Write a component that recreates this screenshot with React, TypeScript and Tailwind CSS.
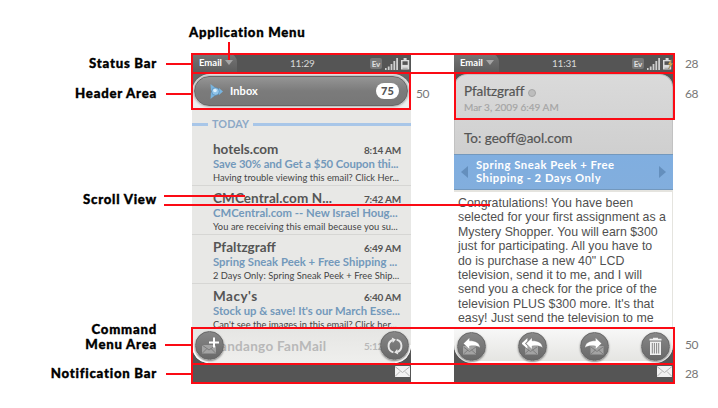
import React from "react";

type Mail = {
  from: string;
  time: string;
  subject: string;
  preview: string;
  fromClass: string;
  subjectClass: string;
  previewClass: string;
};

const mails: Mail[] = [
  {
    from: "hotels.com",
    time: "8:14 AM",
    subject: "Save 30% and Get a $50 Coupon thi...",
    preview: "Having trouble viewing this email? Click Her...",
    fromClass: "tracking-normal",
    subjectClass: "tracking-[-0.08px]",
    previewClass: "tracking-[0.02px]",
  },
  {
    from: "CMCentral.com N...",
    time: "7:42 AM",
    subject: "CMCentral.com -- New Israel Houg...",
    preview: "You are receiving this email because you su...",
    fromClass: "tracking-[0.1px]",
    subjectClass: "tracking-[0.03px]",
    previewClass: "tracking-[0.07px]",
  },
  {
    from: "Pfaltzgraff",
    time: "6:49 AM",
    subject: "Spring Sneak Peek + Free Shipping ...",
    preview: "2 Days Only: Spring Sneak Peek + Free Ship...",
    fromClass: "tracking-normal",
    subjectClass: "tracking-[0.02px]",
    previewClass: "tracking-[0.05px]",
  },
  {
    from: "Macy's",
    time: "6:40 AM",
    subject: "Stock up & save! It's our March Esse...",
    preview: "Can't see the images in this email? Click her...",
    fromClass: "tracking-[0.5px]",
    subjectClass: "tracking-[-0.02px]",
    previewClass: "tracking-[0.02px]",
  },
];

const body = [
  "Congratulations! You have been",
  "selected for your first assignment as a",
  "Mystery Shopper. You will earn $300",
  "just for participating. All you have to",
  'do is purchase a new 40" LCD',
  "television, send it to me, and I will",
  "send you a check for the price of the",
  "television PLUS $300 more. It's that",
  "easy! Just send the television to me",
];

function StatusBar({ time, charging }: { time: string; charging?: boolean }) {
  return (
    <div className="flex h-[21px] shrink-0 items-stretch bg-[#555555] text-white">
      <div
        className={
          "flex w-[45px] items-center gap-[4px] rounded-tr-[9px] bg-gradient-to-b from-[#777777] to-[#5a5a5a] pb-[2px] " +
          (charging ? "pl-[6px]" : "pl-[7px]")
        }
      >
        <span className="w-[22px] text-[9.5px] leading-none font-bold">Email</span>
        <svg width="8" height="5" viewBox="0 0 8 5">
          <path d="M0 0H8L4 5Z" fill="#a5a5a5" />
        </svg>
      </div>
      <div className="flex-1 pt-[5px] pl-[53px] text-[10px] leading-none tracking-[-0.2px] text-[#d8d8d8]">{time}</div>
      <div className="flex items-start gap-[3px] pt-[5px]">
        <span className="flex h-[11px] w-[12px] items-center justify-center rounded-[2px] bg-[#777777] text-[8px] leading-none font-bold text-[#e0e0e0]">
          Ev
        </span>
        <svg width="13" height="12" viewBox="0 0 13 12" fill="#cfcfcf">
          <path d="M0 10h1.6v2H0zM2.8 8.5h1.8V12H2.8zM5.6 6h1.8v6H5.6zM8.4 3h1.8v9H8.4zM11.2 0H13v12h-1.8z" />
        </svg>
        <svg width="10" height="12" viewBox="0 0 10 12">
          <path d="M2.6 0h3v2h2.6v9.6H0V2h2.6z" fill="#dcdcdc" />
          <path d="M1.5 3.3h5.2v3.6H1.5z" fill="#555" />
          <path d="M1.5 9.8h5.2v.7H1.5z" fill="#888" />
          {charging && <path d="M8.5 1.5L4.8 6.5h2.4L5.5 11 10 5.3H7.5z" fill="#e3b452" stroke="#77674a" strokeWidth=".4" />}
        </svg>
      </div>
    </div>
  );
}

function RoundButton({ children }: { children: React.ReactNode }) {
  return (
    <div className="flex size-[29px] shrink-0 items-center justify-center rounded-full border border-[#666666] bg-gradient-to-b from-[#878787] to-[#696969] shadow-[0_1px_2px_rgba(0,0,0,0.45)]">
      {children}
    </div>
  );
}

function ComposeIcon() {
  return (
    <svg width="20" height="20" viewBox="0 0 20 20">
      <rect x="2" y="9" width="14" height="8.5" fill="#a3a3a3" />
      <path d="M2 9l7 5 7-5M2 17.5l5-5M16 17.5l-5-5" fill="none" stroke="#777" strokeWidth=".9" />
      <path d="M14 1.5v10M9 6.5h10" stroke="#fff" strokeWidth="2" />
    </svg>
  );
}

function SyncIcon() {
  return (
    <svg width="20" height="20" viewBox="0 0 20 20" fill="none" stroke="#e8e8e8" strokeWidth="1.9">
      <path d="M8.4 16.3A6.5 6.5 0 0 1 7.6 4" />
      <path d="M11.6 3.7A6.5 6.5 0 0 1 12.4 16" />
      <path d="M6.8 1.4l4 2.2-3 3.5z" fill="#e8e8e8" stroke="none" />
      <path d="M13.2 18.6l-4-2.2 3-3.5z" fill="#e8e8e8" stroke="none" />
    </svg>
  );
}

function ReplyIcon({ kind }: { kind: "reply" | "all" | "forward" }) {
  const arrow = "M1 6.5L7 .8v3c6.5 0 9.800 2 10.600 7-2.600-2.100-5.400-2.300-10.600-1.800v3.300z";
  return (
    <svg width="21" height="19" viewBox="0 0 21 19">
      <rect x={kind === "forward" ? 6.5 : kind === "all" ? 3 : 2} y="9" width="13" height="8.5" fill="#a3a3a3" />
      <path
        d={kind === "forward" ? "M7 17l4.5-4M19 17L14.5 13M7 10l6 4.5 6-4.5" : "M2.5 17l4.5-4M15 17L10.5 13M2.5 10l6 4.5 6.5-4.5"}
        fill="none"
        stroke="#747474"
        strokeWidth=".8"
      />
      {kind === "all" && <path d="M-.5 6.500L5.400 1v3L3 6.500l2.400 2.300v3z" fill="#fff" />}
      <path
        d={arrow}
        fill="#fff"
        stroke="#777"
        strokeWidth=".3"
        transform={kind === "forward" ? "translate(18.5 0) scale(-1 1)" : kind === "all" ? "translate(3 0)" : "translate(1.5 0)"}
      />
    </svg>
  );
}

function TrashIcon() {
  return (
    <svg width="15" height="19" viewBox="0 0 15 19">
      <path d="M5 1.8V.7h5v1.1h3.5v1.7h-12V1.8z" fill="#f0f0f0" />
      <path d="M2 4.6h11V18H2z" fill="#f0f0f0" />
      <path d="M4.3 6v10.5M6.4 6v10.5M8.6 6v10.5M10.7 6v10.5" stroke="#7c7c7c" strokeWidth=".9" />
    </svg>
  );
}

function NotificationBar() {
  return (
    <div className="flex h-[20px] shrink-0 justify-end bg-[#555555] pt-[3px] pr-[1px]">
      <svg width="15" height="11" viewBox="0 0 15 11">
        <rect width="15" height="11" fill="#f2f2f2" />
        <path d="M0 .5l7.5 6L15 .5M0 10.5l5-5M15 10.5l-5-5" fill="none" stroke="#b4b4b4" />
      </svg>
    </div>
  );
}

function InboxPhone() {
  return (
    <div className="flex h-[330px] w-[219px] shrink-0 flex-col overflow-hidden bg-[#e8e8e6]">
      <StatusBar time="11:29" />
      <div className="h-[35px] shrink-0 bg-[#666666]">
        <div className="h-full rounded-t-[18px] bg-[#eeeeee] p-[2px] pr-[3px] pb-[3px]">
          <div className="flex h-[30px] items-center rounded-full border border-[#666666] bg-gradient-to-b from-[#959595] via-[#7b7b7b] to-[#777777] pr-[8px] pl-[14px] shadow-[0_0_3px_rgba(0,0,0,0.5)]">
            <svg width="15" height="17" viewBox="0 0 15 17">
              <path d="M1.5 1l5 4-4.5 3zM1.5 16l5-4-4.5-3zM10 5l4 3.5-4 3.5z" fill="#78b4df" />
              <circle cx="6.5" cy="8.5" r="3.8" fill="#91c4e9" stroke="#4b86b4" strokeWidth=".6" />
              <circle cx="6" cy="7.5" r="1.8" fill="#dceffc" />
            </svg>
            <span className="pb-[1px] pl-[6px] text-[11px] leading-none font-bold tracking-[0.1px] text-white">Inbox</span>
            <span className="ml-auto flex h-[16px] w-[23px] items-center justify-center rounded-full bg-white text-[11px] font-black text-[#555555]">
              75
            </span>
          </div>
        </div>
      </div>
      <div className="flex h-[28px] shrink-0 items-center gap-[4px] pt-[3px]">
        <div className="h-[3px] w-[16px] bg-[#a8c6e8]" />
        <div className="text-[10.8px] leading-none font-bold tracking-[0.1px] text-[#8da9c6]">TODAY</div>
        <div className="h-[3px] flex-1 bg-[#a8c6e8]" />
      </div>
      {mails.map((m) => (
        <div key={m.from} className="h-[49px] shrink-0 border-b border-[#d6d6d4] pt-[4px] pr-[10px] pl-[21px] whitespace-nowrap">
          <div className="flex items-baseline justify-between leading-[16px] text-[#555555]">
            <span className={"text-[13.5px] font-bold " + m.fromClass}>{m.from}</span>
            <span className="text-[10px] font-bold tracking-[-0.2px]">{m.time}</span>
          </div>
          <div className={"text-[11.3px] leading-[12px] font-bold text-[#7399bb] " + m.subjectClass}>{m.subject}</div>
          <div className={"text-[9.3px] leading-[15px] text-[#444444] " + m.previewClass}>{m.preview}</div>
        </div>
      ))}
      <div className="relative -mt-[6px] h-[36px] shrink-0">
        <div className="flex h-full justify-between bg-gradient-to-b from-[#e5e5e3] to-[#efefed] pt-[10px] pr-[10px] pl-[21px] leading-[18px] text-[#b8b8b8]">
          <span className="text-[13.5px] font-bold tracking-[0.3px]">Fandango FanMail</span>
          <span className="text-[10px] font-bold tracking-[-0.2px]">5:12 AM</span>
        </div>
        <svg className="absolute inset-0" width="219" height="36" viewBox="0 0 219 36">
          <path d="M0 18Q1 34 16 36H0zM219 18Q218 34 203 36H219z" fill="#555" />
          <path d="M.5 18Q1.5 33 16 35.5M218.5 18Q217.5 33 203 35.5" fill="none" stroke="#fff" strokeWidth="1.6" />
        </svg>
        <div className="absolute inset-0 flex items-center justify-between pt-[1px] pr-[2px] pl-[3px]">
          <RoundButton>
            <ComposeIcon />
          </RoundButton>
          <RoundButton>
            <SyncIcon />
          </RoundButton>
        </div>
      </div>
      <NotificationBar />
    </div>
  );
}

function MessagePhone() {
  return (
    <div className="flex h-[330px] w-[219px] shrink-0 flex-col overflow-hidden bg-white">
      <StatusBar time="11:31" charging />
      <div className="h-[80px] shrink-0 bg-[#555555]">
        <div className="h-full rounded-t-[13px] border-x border-t border-[#c2c2c2] bg-gradient-to-b from-[#dadada] to-[#cfcfcf] text-[#555555]">
          <div className="h-[45px] border-b border-[#bdbdbd] pt-[9px] pl-[9px]">
            <div className="flex items-center gap-[4px] text-[13.5px] leading-[15px] tracking-[-0.1px] [-webkit-text-stroke:0.2px_#555555]">
              <span>Pfaltzgraff</span>
              <span className="mt-[2px] size-[8px] rounded-full border border-[#a5a5a5] bg-[#bdbdbd]" />
            </div>
            <div className="text-[10px] leading-[16px] text-[#a4a4a4] [-webkit-text-stroke:0.15px_#a4a4a4]">Mar 3, 2009 6:49 AM</div>
          </div>
          <div className="pt-[10px] pl-[9px] text-[13.5px] leading-[17px] [-webkit-text-stroke:0.2px_#555555]">To: geoff@aol.com</div>
        </div>
      </div>
      <div className="flex h-[36px] shrink-0 items-center justify-between border-y border-[#7398bd] bg-gradient-to-b from-[#80aee0] to-[#82aedd] px-[7px] text-white">
        <svg width="7" height="12" viewBox="0 0 7 12">
          <path d="M7 0v12L0 6z" fill="#648fbd" />
        </svg>
        <div className="flex-1 pb-[1px] pl-[8px] text-[11.3px] leading-[12.5px] font-bold tracking-[0.5px]">
          Spring Sneak Peek + Free
          <br />
          Shipping - 2 Days Only
        </div>
        <svg width="7" height="12" viewBox="0 0 7 12">
          <path d="M0 0v12l7-6z" fill="#648fbd" />
        </svg>
      </div>
      <div className="h-[138px] shrink-0 border-t-2 border-r border-[#e5e4df] pt-[4px] pl-[4px] font-['Liberation_Sans',Arial,sans-serif] text-[12.35px] leading-[14.4px] whitespace-nowrap text-[#505050]">
        {body.map((line) => (
          <div key={line}>{line}</div>
        ))}
      </div>
      <div className="h-[35px] shrink-0 bg-[#555555]">
        <div className="flex h-full items-center justify-between rounded-b-[18px] border-b-2 border-white bg-gradient-to-b from-[#f8f8f8] to-[#e5e5e2] pt-[3px] pr-[3px] pl-[3px]">
          <RoundButton>
            <ReplyIcon kind="reply" />
          </RoundButton>
          <RoundButton>
            <ReplyIcon kind="all" />
          </RoundButton>
          <RoundButton>
            <ReplyIcon kind="forward" />
          </RoundButton>
          <RoundButton>
            <TrashIcon />
          </RoundButton>
        </div>
      </div>
      <NotificationBar />
    </div>
  );
}

function Annotations() {
  return (
    <svg className="pointer-events-none absolute inset-0" width="718" height="408" viewBox="0 0 718 408" fill="none" stroke="#fb0a14" strokeWidth="2">
      <path d="M192 54H674V73H192zM192 73V109H410V73M455 73V119H674V73" />
      <path d="M192 328H674V383H192zM192 364H674" />
      <path d="M229 42V60M166 64H192M166 94H192M164 196H245M164 205H490M165 345H192M166 374H192" />
    </svg>
  );
}

export default function App() {
  return (
    <div className="relative flex h-[408px] w-[718px] flex-col overflow-hidden bg-white font-[Lato,sans-serif]">
      <div className="h-[53px] shrink-0 pt-[24px] pl-[189px] text-[13.2px] leading-[16px] font-black tracking-[0.7px] text-black [-webkit-text-stroke:0.35px_black]">
        Application Menu
      </div>
      <div className="flex">
        <div className="flex w-[192px] shrink-0 flex-col pr-[35px] text-right text-[13.2px] leading-[15px] font-black tracking-[0.75px] whitespace-nowrap text-black [-webkit-text-stroke:0.35px_black]">
          <div className="pt-[3px]">Status Bar</div>
          <div className="pt-[15px]">Header Area</div>
          <div className="pt-[91px]">Scroll View</div>
          <div className="pt-[115px]">
            Command
            <br />
            Menu Area
          </div>
          <div className="pt-[14px]">Notification Bar</div>
        </div>
        <InboxPhone />
        <div className="w-[43px] shrink-0 pt-[33px] pl-[5px] text-[12px] leading-[16px] tracking-[-0.5px] text-[#777777]">50</div>
        <MessagePhone />
        <div className="pl-[12px] text-[12px] leading-[16px] tracking-[-0.5px] text-[#777777]">
          <div className="pt-[3px]">28</div>
          <div className="pt-[14px]">68</div>
          <div className="pt-[235px]">50</div>
          <div className="pt-[13px]">28</div>
        </div>
      </div>
      <Annotations />
    </div>
  );
}
